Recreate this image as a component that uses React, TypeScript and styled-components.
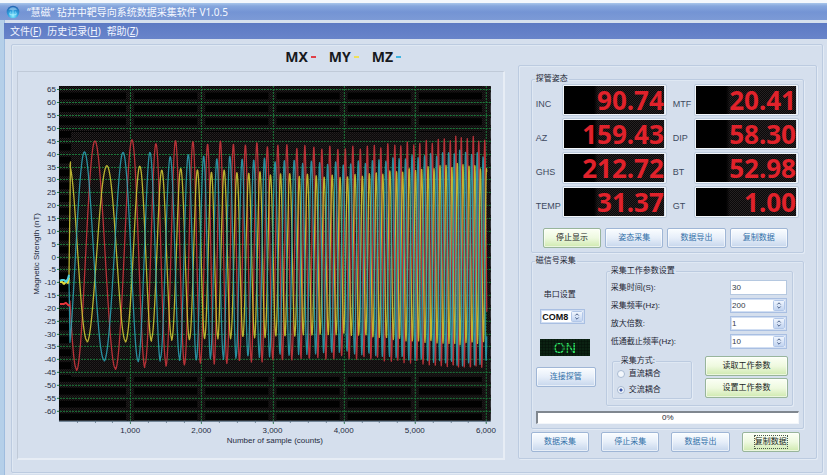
import React from "react";
import styled, { createGlobalStyle, css } from "styled-components";

const cjk = `"Liberation Sans", "Noto Sans CJK SC", sans-serif`;
const humanist = `"Noto Sans", "Noto Sans CJK SC", sans-serif`;

const GlobalStyle = createGlobalStyle`
  * { box-sizing: border-box; }
  body { margin: 0; background: #d5dfed; font-family: ${cjk}; font-size: 8px; line-height: 10px; color: #1d2634; }
  button, input, select { font: inherit; color: inherit; margin: 0; }
`;

const Window = styled.div`
  min-height: 100vh;
  display: flex;
  flex-direction: column;
  border-top: 3px solid #f4f8fc;
  background: #d5dfed;
`;

const TitleBar = styled.header`
  display: flex;
  align-items: center;
  gap: 7px;
  height: 17px;
  padding: 0 6px;
  background: linear-gradient(#a9c6ea 0, #86a7dd 3px, #7494d4 9px, #7c9ad6 100%);
`;

const Title = styled.h1`
  margin: 0;
  font: 400 10px/14px ${humanist};
  color: #f5f8ff;
`;

const Frame = styled.div`
  flex: 1;
  display: flex;
  flex-direction: column;
  padding-top: 3px;
  border-left: 4px solid #b4cfe9;
  box-shadow: inset 1px 0 #9ebcdf;
`;

const MenuBar = styled.nav`
  display: flex;
  align-items: center;
  gap: 6px;
  height: 16px;
  padding: 0 6px;
  background: linear-gradient(#5c79c3, #6884ca);
`;

const MenuLink = styled.a`
  font: 400 10px/14px ${humanist};
  color: #f1f5ff;
  text-decoration: none;
`;

const etched = css`
  border: 1px solid #bccbe0;
  border-radius: 2px;
  box-shadow: 1px 1px #e3ebf5, inset 1px 1px #dfe8f3;
`;

const Workspace = styled.main`
  ${etched}
  flex: 1;
  display: grid;
  grid-template-columns: minmax(0, 1.63fr) minmax(0, 1fr);
  gap: 13px;
  align-items: start;
  margin: 5px 4px 2px 7px;
  padding: 0 5px;
`;

const Series = styled.ul`
  display: flex;
  gap: 13px;
  margin: 0;
  padding: 0 0 2px 55%;
  height: 26px;
  align-items: center;
  list-style: none;
`;

const SeriesItem = styled.li<{ $color: string }>`
  display: flex;
  align-items: center;
  gap: 3px;
  font: 700 14px/20px ${humanist};
  color: #17191d;
  &::after {
    content: "";
    width: 5px;
    height: 2px;
    background: ${(p) => p.$color};
  }
`;

const ChartFrame = styled.div`
  border: 1px solid #c0cad8;
  border-right: 2px solid #e7edf5;
  border-bottom: 2px solid #e7edf5;
`;

const ChartSvg = styled.svg`
  display: block;
  width: 100%;
  height: auto;
  font-family: "Liberation Sans", sans-serif;
  font-size: 8px;
  fill: #1f2b40;
`;

const Side = styled.section`
  ${etched}
  margin-top: 20px;
  padding: 8px 12px 6px;
`;

const Group = styled.fieldset<{ $pad?: string; $top?: number }>`
  ${etched}
  min-width: 0;
  margin: ${(p) => p.$top ?? 0}px 0 0;
  padding: ${(p) => p.$pad ?? "0"};
`;

const Legend = styled.legend`
  margin-left: 3px;
  padding: 0 1px;
  line-height: 10px;
`;

const Readouts = styled.div`
  display: grid;
  grid-template-columns: 27px minmax(0, 1fr) 27px minmax(0, 1fr);
  row-gap: 2px;
  padding: 0 4px 0 3px;
`;

const ReadoutLabel = styled.label`
  align-self: center;
  padding: 7px 0 0 1px;
  font-size: 9px;
  color: #3d4a5f;
  &:nth-of-type(even) {
    padding-left: 6px;
  }
`;

const Readout = styled.output`
  height: 32px;
  border: 1px solid #bccbdd;
  border-radius: 2px;
  box-shadow: inset 0 0 0 1px #f2f6fa;
  padding: 1px 2px 1px 1px;
  text-align: right;
  font: 700 26px/28px "Noto Sans", sans-serif;
  color: #e0222b;
  background:
    linear-gradient(90deg, #000 30%, #00000000 34%) content-box,
    conic-gradient(#0a0909 25%, #262122 0 50%, #0a0909 0 75%, #262122 0) 0 0 / 2px 2px content-box;
`;

const Button = styled.button<{ $primary?: boolean; $focused?: boolean }>`
  height: 20px;
  padding: 0;
  border: 1px solid ${(p) => (p.$primary ? "#98b59b" : "#9fb6d6")};
  border-radius: 2px;
  background: ${(p) =>
    p.$primary
      ? "linear-gradient(#fbfff5, #eef9df 50%, #cfe9af)"
      : "linear-gradient(#fafdff, #e6eef9 50%, #c6d6ec)"};
  box-shadow: inset 0 0 0 1px #ffffff90;
  color: ${(p) => (p.$primary ? "#18251b" : "#3270a8")};
  line-height: 12px;
  span {
    display: inline-block;
    outline: ${(p) => (p.$focused ? "1px dotted #4c584c" : "none")};
  }
`;

const ButtonRow = styled.div<{ $gap: number; $pad: string }>`
  display: grid;
  grid-template-columns: repeat(4, minmax(0, 1fr));
  gap: ${(p) => p.$gap}px;
  padding: ${(p) => p.$pad};
`;

const Acquisition = styled.div`
  display: grid;
  grid-template-columns: 60px minmax(0, 1fr);
  column-gap: 10px;
  padding: 0 10px 0 4px;
`;

const PortColumn = styled.div`
  display: flex;
  flex-direction: column;
  align-items: center;
  padding-top: 24px;
`;

const PortLabel = styled.label`
  margin: 0 12px 9px 0;
`;

const SelectBox = styled.span<{ $bold?: boolean }>`
  position: relative;
  display: block;
  height: 15px;
  width: ${(p) => (p.$bold ? "45px" : "auto")};
  margin-right: ${(p) => (p.$bold ? "6px" : "0")};
  font-size: ${(p) => (p.$bold ? "9px" : "8px")};
  font-weight: ${(p) => (p.$bold ? 700 : 400)};
  color: ${(p) => (p.$bold ? "#111" : "#343c48")};
  svg {
    position: absolute;
    right: 2px;
    top: 2px;
    pointer-events: none;
  }
`;

const Select = styled.select`
  appearance: none;
  display: block;
  width: 100%;
  height: 15px;
  padding: 0 1px;
  border: 1px solid #a9bfe2;
  border-radius: 0;
  box-shadow: inset 0 0 0 1px #d2dff3;
  background: #fff;
`;

const TextInput = styled.input`
  width: 100%;
  height: 15px;
  padding: 0 1px;
  border: 1px solid #b5c8e0;
  background: #fff;
  color: #343c48;
`;

const Led = styled.output`
  width: 50px;
  height: 17px;
  margin: 15px 2px 11px 0;
  text-align: center;
  font: 400 15px/17px "Liberation Sans", sans-serif;
  color: #2fe868;
  position: relative;
  background: #0b2212;
  &::after {
    content: "";
    position: absolute;
    inset: 0;
    background:
      repeating-linear-gradient(90deg, transparent 0 2px, #04100880 2px 3px),
      repeating-linear-gradient(transparent 0 2px, #04100880 2px 3px);
  }
`;

const Wide = styled.div`
  display: grid;
  width: 100%;
`;

const ParamGrid = styled.div`
  display: grid;
  grid-template-columns: minmax(0, 1fr) 57px;
  row-gap: 3px;
  align-items: center;
  padding: 4px 5px 7px 4px;
`;

const ModeRow = styled.div`
  display: grid;
  grid-template-columns: minmax(0, 1fr) 83px;
  gap: 13px;
  padding: 0 4px 6px 5px;
`;

const ModeOption = styled.label`
  display: flex;
  align-items: center;
  gap: 4px;
  height: 16px;
`;

const Radio = styled.input`
  appearance: none;
  width: 8px;
  height: 8px;
  border: 1px solid #a9bbd2;
  border-radius: 50%;
  background: #f3f7fc;
  &:checked {
    background: radial-gradient(circle, #3e58a8 0 1px, #f3f7fc 2px);
  }
`;

const ActionStack = styled.div`
  display: grid;
  gap: 2px;
  align-content: start;
`;

const Progress = styled.div`
  height: 13px;
  margin: 5px 4px 4px;
  border: 1px solid #f3f6fa;
  border-top: 2px solid #80878f;
  border-left: 2px solid #80878f;
  background: #fff;
  text-align: center;
  line-height: 10px;
`;

const Logo = () => (
  <svg width="14" height="14" viewBox="0 0 14 14" aria-hidden="true">
    <defs>
      <radialGradient id="globe" cx="50%" cy="80%" r="75%">
        <stop offset="0" stopColor="#8af0ff" />
        <stop offset=".5" stopColor="#2fa3e0" />
        <stop offset="1" stopColor="#2467b4" />
      </radialGradient>
    </defs>
    <circle cx="7" cy="7" r="6.3" fill="url(#globe)" />
    <path d="M2.6 4.6Q7 0 11.4 4.6Q7 6 2.6 4.6Z" fill="#a9d4f3" opacity=".6" />
    <path d="M7 5v6.5M4.5 6.5q-1.5 2 .5 4M9.5 6.5q1.5 2 -.5 4M3 9q4 1.5 8 0" stroke="#b9f3ff" strokeWidth=".6" fill="none" opacity=".8" />
  </svg>
);

const Arrows = () => (
  <svg width="12" height="11" viewBox="0 0 12 11" aria-hidden="true">
    <defs>
      <linearGradient id="knob" x2="0" y2="1">
        <stop offset="0" stopColor="#f2f7fe" />
        <stop offset="1" stopColor="#bfd2f0" />
      </linearGradient>
    </defs>
    <rect x=".5" y=".5" width="11" height="10" rx="1" fill="url(#knob)" stroke="#b2c7e8" />
    <path d="M4.3 4.5L6 2.8L7.7 4.5M4.3 6.5L6 8.2L7.7 6.5" fill="none" stroke="#4a6088" strokeWidth="1" />
  </svg>
);

/* Chart geometry */
const PLOT = { left: 41, right: 473, top: 14, bottom: 349 };
const xOf = (n: number) => 41 + n * 0.0712;
const yOf = (v: number) => 184.5 - v * 2.57;

/* [x, cycles] knots of the sweep; from the ninth on every knot is one full cycle */
const knots: [number, number][] = [
  [51.5, -0.7], [58.5, -0.5], [77, 0], [97.3, 0.5], [114, 1], [127, 1.5], [138, 2], [148, 2.5],
];
[
  157.6, 175, 189.7, 202.5, 215.5, 227.5, 239, 249.5, 260, 269, 279, 287, 296, 304, 312, 320, 327.5, 335, 342.5,
  349.5, 356.5, 363, 370, 377, 383, 389.5, 396, 402, 408.5, 414.5, 420.5, 426.5, 432.5, 438, 443.5, 449.5, 455.5, 461, 467, 473,
].forEach((x, i) => knots.push([x, 3 + i]));

const cyclesAt = (x: number) => {
  let i = 0;
  while (i < knots.length - 2 && knots[i + 1][0] < x) i++;
  const [x1, c1] = knots[i];
  const [x2, c2] = knots[i + 1];
  const slope = (a: number, b: number) => {
    const p = knots[Math.max(a, 0)];
    const q = knots[Math.min(b, knots.length - 1)];
    return (q[1] - p[1]) / (q[0] - p[0]);
  };
  const h = x2 - x1;
  const t = (x - x1) / h;
  const m1 = slope(i - 1, i + 1) * h;
  const m2 = slope(i, i + 2) * h;
  return (
    (2 * t ** 3 - 3 * t ** 2 + 1) * c1 + (t ** 3 - 2 * t ** 2 + t) * m1 +
    (-2 * t ** 3 + 3 * t ** 2) * c2 + (t ** 3 - t ** 2) * m2
  );
};

const envelope = (x: number, levels: number[]) => {
  const stops = [52, 180, 325, 400, 445, 470];
  let i = 0;
  while (i < stops.length - 2 && stops[i + 1] < x) i++;
  const t = (x - stops[i]) / (stops[i + 1] - stops[i]);
  return levels[i] + (levels[i + 1] - levels[i]) * t;
};

const wave = (lead: string, shift: number, up: number[], down: number[]) => {
  let d = lead;
  for (let x = 52; x <= 469; x += 0.25) {
    const c = cyclesAt(x) - shift;
    const s = Math.cos(c * 2 * Math.PI);
    const ripple = 1 + 0.018 * Math.sin(Math.round(c) * 2.3);
    const v = s * ripple * envelope(x, s > 0 ? up : down);
    d += `L${x} ${yOf(v).toFixed(1)}`;
  }
  return d;
};

const redLead = "M42 232l4 0l2 -1l2 2l2 1";
const yellowLead = "M42 210l2 0l2 2l2 -2l2 1l1 -5";
const cyanLead = "M42 209l2 -1l2 0l2 2l2 -3l1 -4";

const redPath = wave(redLead, 0, [45, 44.5, 42, 44, 46.5, 45], [44.5, 41.5, 39, 41, 43.5, 43]);
const yellowPath = wave(`${yellowLead}L52.5 90`, 0.29, [36, 33.5, 31, 34, 36, 34], [33.5, 32, 30, 33, 34, 33]);
const cyanPath = wave(cyanLead, 0.72, [41.5, 39, 36, 39, 41, 39], [41, 40, 37, 40, 42, 41]);

const yTicks = Array.from({ length: 26 }, (_, i) => 65 - i * 5);
const xTicks = [1000, 2000, 3000, 4000, 5000, 6000];
const minorTicks = Array.from({ length: 24 }, (_, i) => (i + 1) * 250);

const Chart = () => (
  <ChartSvg viewBox="0 0 485 386" role="img" aria-label="Magnetic Strength (nT)">
    <defs>
      <pattern id="speckle" width="2" height="2" patternUnits="userSpaceOnUse">
        <rect width="2" height="2" fill="#050404" />
        <rect width="1" height="1" fill="#2b2627" />
        <rect x="1" y="1" width="1" height="1" fill="#201c1d" />
      </pattern>
    </defs>
    <rect x={PLOT.left} y={PLOT.top} width={PLOT.right - PLOT.left} height={PLOT.bottom - PLOT.top} fill="#010101" />
    {xTicks.map((n) => (
      <rect key={n} x={xOf(n) - 4} y={PLOT.top} width="8" height={PLOT.bottom - PLOT.top} fill="url(#speckle)" />
    ))}
    {yTicks.map((v) => (
      <rect key={v} x={PLOT.left} y={yOf(v) - 3} width="432" height="6" fill="url(#speckle)" />
    ))}
    <rect x="53" y="60" width="418" height="245" fill="url(#speckle)" />
    <g stroke="#1c7a3b" strokeWidth="1" strokeDasharray="2 1">
      {yTicks.map((v) => (
        <path key={v} d={`M${PLOT.left - 2} ${Math.round(yOf(v)) + 0.5}H${PLOT.right}`} />
      ))}
      {xTicks.map((n) => (
        <path key={n} d={`M${Math.round(xOf(n)) + 0.5} ${PLOT.top}V${PLOT.bottom + 3}`} />
      ))}
    </g>
    <g fill="none" strokeWidth="1.3" strokeLinejoin="round">
      <path d={redPath} stroke="#b93238" />
      <path d={yellowPath} stroke="#cdc534" strokeOpacity=".9" />
      <path d={cyanPath} stroke="#2ba6b8" strokeOpacity=".85" />
      <path d={redLead} stroke="#e5343a" strokeWidth="2" />
      <path d={yellowLead} stroke="#e4dc3a" strokeWidth="2" />
      <path d={cyanLead} stroke="#4fd0e0" strokeWidth="2" />
    </g>
    <g stroke="#5e7386">
      <path d={`M${PLOT.left} ${PLOT.bottom + 0.5}H${PLOT.right}`} />
      {minorTicks.map((n) => (
        <path key={n} d={`M${Math.round(xOf(n)) + 0.5} ${PLOT.bottom}v2`} />
      ))}
    </g>
    <g textAnchor="end">
      {yTicks.map((v) => (
        <text key={v} x="38" y={Math.round(yOf(v)) + 3}>{v}</text>
      ))}
    </g>
    <g textAnchor="middle">
      {xTicks.map((n) => (
        <text key={n} x={xOf(n)} y="361">{n.toLocaleString("en-US")}</text>
      ))}
      <text x="257" y="371">Number of sample (counts)</text>
      <text transform="translate(21 182) rotate(-90)">Magnetic Strength (nT)</text>
    </g>
  </ChartSvg>
);

const readouts: [string, string][] = [
  ["INC", "90.74"], ["MTF", "20.41"],
  ["AZ", "159.43"], ["DIP", "58.30"],
  ["GHS", "212.72"], ["BT", "52.98"],
  ["TEMP", "31.37"], ["GT", "1.00"],
];

const menus: [string, string][] = [["文件", "F"], ["历史记录", "H"], ["帮助", "Z"]];

const ParamSelect = ({ id, label, value }: { id: string; label: string; value: string }) => (
  <>
    <label htmlFor={id}>{label}</label>
    <SelectBox>
      <Select id={id} defaultValue={value}>
        <option>{value}</option>
      </Select>
      <Arrows />
    </SelectBox>
  </>
);

export default function App() {
  return (
    <Window>
      <GlobalStyle />
      <TitleBar>
        <Logo />
        <Title>“慧磁” 钻井中靶导向系统数据采集软件 V1.0.5</Title>
      </TitleBar>
      <Frame>
        <MenuBar>
          {menus.map(([name, key]) => (
            <MenuLink key={key} href="#">{name}(<u>{key}</u>)</MenuLink>
          ))}
        </MenuBar>
        <Workspace>
          <section>
            <Series>
              <SeriesItem $color="#e0404a">MX</SeriesItem>
              <SeriesItem $color="#efe05a">MY</SeriesItem>
              <SeriesItem $color="#3fb4e0">MZ</SeriesItem>
            </Series>
            <ChartFrame>
              <Chart />
            </ChartFrame>
          </section>
          <Side>
            <Group $pad="0 0 4px">
              <Legend>探管姿态</Legend>
              <Readouts>
                {readouts.map(([name, value]) => (
                  <React.Fragment key={name}>
                    <ReadoutLabel htmlFor={name}>{name}</ReadoutLabel>
                    <Readout id={name}>{value}</Readout>
                  </React.Fragment>
                ))}
              </Readouts>
              <ButtonRow $gap={4} $pad="10px 15px 0 11px">
                <Button $primary><span>停止显示</span></Button>
                <Button><span>姿态采集</span></Button>
                <Button><span>数据导出</span></Button>
                <Button><span>复制数据</span></Button>
              </ButtonRow>
            </Group>
            <Group $top={3}>
              <Legend>磁信号采集</Legend>
              <Acquisition>
                <PortColumn>
                  <PortLabel htmlFor="port">串口设置</PortLabel>
                  <SelectBox $bold>
                    <Select id="port" defaultValue="COM8">
                      <option>COM8</option>
                    </Select>
                    <Arrows />
                  </SelectBox>
                  <Led>ON</Led>
                  <Wide>
                    <Button><span>连接探管</span></Button>
                  </Wide>
                </PortColumn>
                <Group>
                  <Legend>采集工作参数设置</Legend>
                  <ParamGrid>
                    <label htmlFor="time">采集时间(S):</label>
                    <TextInput id="time" defaultValue="30" />
                    <ParamSelect id="rate" label="采集频率(Hz):" value="200" />
                    <ParamSelect id="gain" label="放大倍数:" value="1" />
                    <ParamSelect id="cutoff" label="低通截止频率(Hz):" value="10" />
                  </ParamGrid>
                  <ModeRow>
                    <Group $pad="0 4px">
                      <Legend>采集方式:</Legend>
                      <ModeOption>
                        <Radio type="radio" name="coupling" />
                        直流耦合
                      </ModeOption>
                      <ModeOption>
                        <Radio type="radio" name="coupling" defaultChecked />
                        交流耦合
                      </ModeOption>
                    </Group>
                    <ActionStack>
                      <Button $primary><span>读取工作参数</span></Button>
                      <Button $primary><span>设置工作参数</span></Button>
                    </ActionStack>
                  </ModeRow>
                </Group>
              </Acquisition>
              <Progress role="progressbar" aria-label="采集" aria-valuenow={0}>0%</Progress>
            </Group>
            <ButtonRow $gap={12} $pad="3px 4px 0 0">
              <Button><span>数据采集</span></Button>
              <Button><span>停止采集</span></Button>
              <Button><span>数据导出</span></Button>
              <Button $primary $focused><span>复制数据</span></Button>
            </ButtonRow>
          </Side>
        </Workspace>
      </Frame>
    </Window>
  );
}
